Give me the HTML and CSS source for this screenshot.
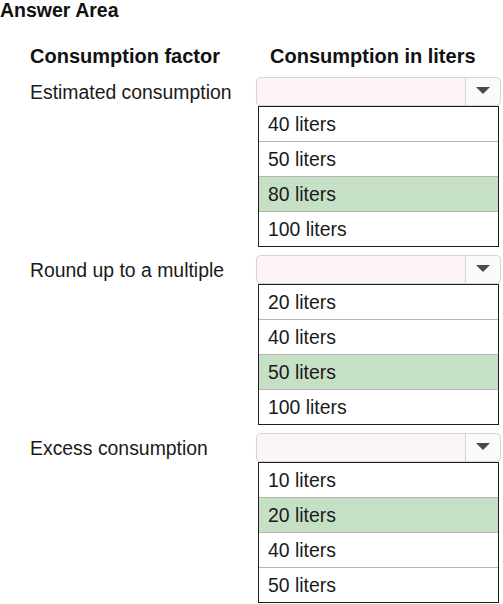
FILE: index.html
```html
<!DOCTYPE html>
<html>
<head>
<meta charset="utf-8">
<link rel="stylesheet" href="styles.css">
</head>
<body>
<div class="page">
  <h1 class="title">Answer Area</h1>
  <div class="grid head">
    <div class="head-a">Consumption factor</div>
    <div class="head-b">Consumption in liters</div>
  </div>

  <div class="grid row">
    <div class="label">Estimated consumption</div>
    <div class="control">
      <div class="select"><span class="field"></span><span class="btn"><span class="arrow"></span></span></div>
      <ul class="list">
        <li>40 liters</li>
        <li>50 liters</li>
        <li class="sel">80 liters</li>
        <li>100 liters</li>
      </ul>
    </div>
  </div>

  <div class="grid row">
    <div class="label">Round up to a multiple</div>
    <div class="control">
      <div class="select"><span class="field"></span><span class="btn"><span class="arrow"></span></span></div>
      <ul class="list">
        <li>20 liters</li>
        <li>40 liters</li>
        <li class="sel">50 liters</li>
        <li>100 liters</li>
      </ul>
    </div>
  </div>

  <div class="grid row">
    <div class="label">Excess consumption</div>
    <div class="control">
      <div class="select"><span class="field"></span><span class="btn"><span class="arrow"></span></span></div>
      <ul class="list">
        <li>10 liters</li>
        <li class="sel">20 liters</li>
        <li>40 liters</li>
        <li>50 liters</li>
      </ul>
    </div>
  </div>
</div>
</body>
</html>
```
FILE: styles.css
```css
html, body {
  margin: 0;
  padding: 0;
  background: #ffffff;
}
.page {
  font-family: "Liberation Sans", Arial, sans-serif;
  color: #1a1a1a;
  width: 503px;
}
.title {
  margin: 0;
  font-size: 19.5px;
  font-weight: bold;
  line-height: 21px;
  color: #111;
}
.grid {
  display: grid;
  grid-template-columns: 256px 245px;
}
.head {
  margin-top: 23px;
  font-size: 20px;
  font-weight: bold;
  line-height: 24px;
  color: #111;
}
.head-a { padding-left: 30px; }
.head-b { padding-left: 14px; }
.row {
  margin-top: 8px;
}
.head + .row { margin-top: 9px; }
.label {
  padding-left: 30px;
  height: 29px;
  display: flex;
  align-items: center;
  font-size: 19.4px;
  padding-top: 2px;
  box-sizing: border-box;
}
.control {
  display: flex;
  flex-direction: column;
}
.select {
  height: 29px;
  box-sizing: border-box;
  border: 1px solid #d6d6d6;
  border-radius: 5px;
  background: #fdf4f6;
  display: flex;
  box-shadow: 0 0 1px rgba(0,0,0,0.08);
}
.field { flex: 1; }
.btn {
  width: 34px;
  border-left: 1px solid #d4d4d4;
  display: flex;
  align-items: center;
  justify-content: center;
  background: #fbfafa;
  border-radius: 0 5px 5px 0;
}
.arrow {
  width: 0;
  height: 0;
  border-left: 7px solid transparent;
  border-right: 7px solid transparent;
  border-top: 7px solid #4a4a4a;
  margin-top: -3px;
}
.list {
  list-style: none;
  margin: 0 2px 0 2px;
  padding: 0;
  border: 1px solid #1e1e1e;
  background: #fff;
}
.list li {
  height: 34px;
  line-height: 34px;
  padding-left: 9px;
  font-size: 19.4px;
  color: #1a1a1a;
  border-top: 1px solid #b5b5b5;
}
.list li:first-child { border-top: none; }
.list li.sel {
  background: #c6e0c6;
}
```
